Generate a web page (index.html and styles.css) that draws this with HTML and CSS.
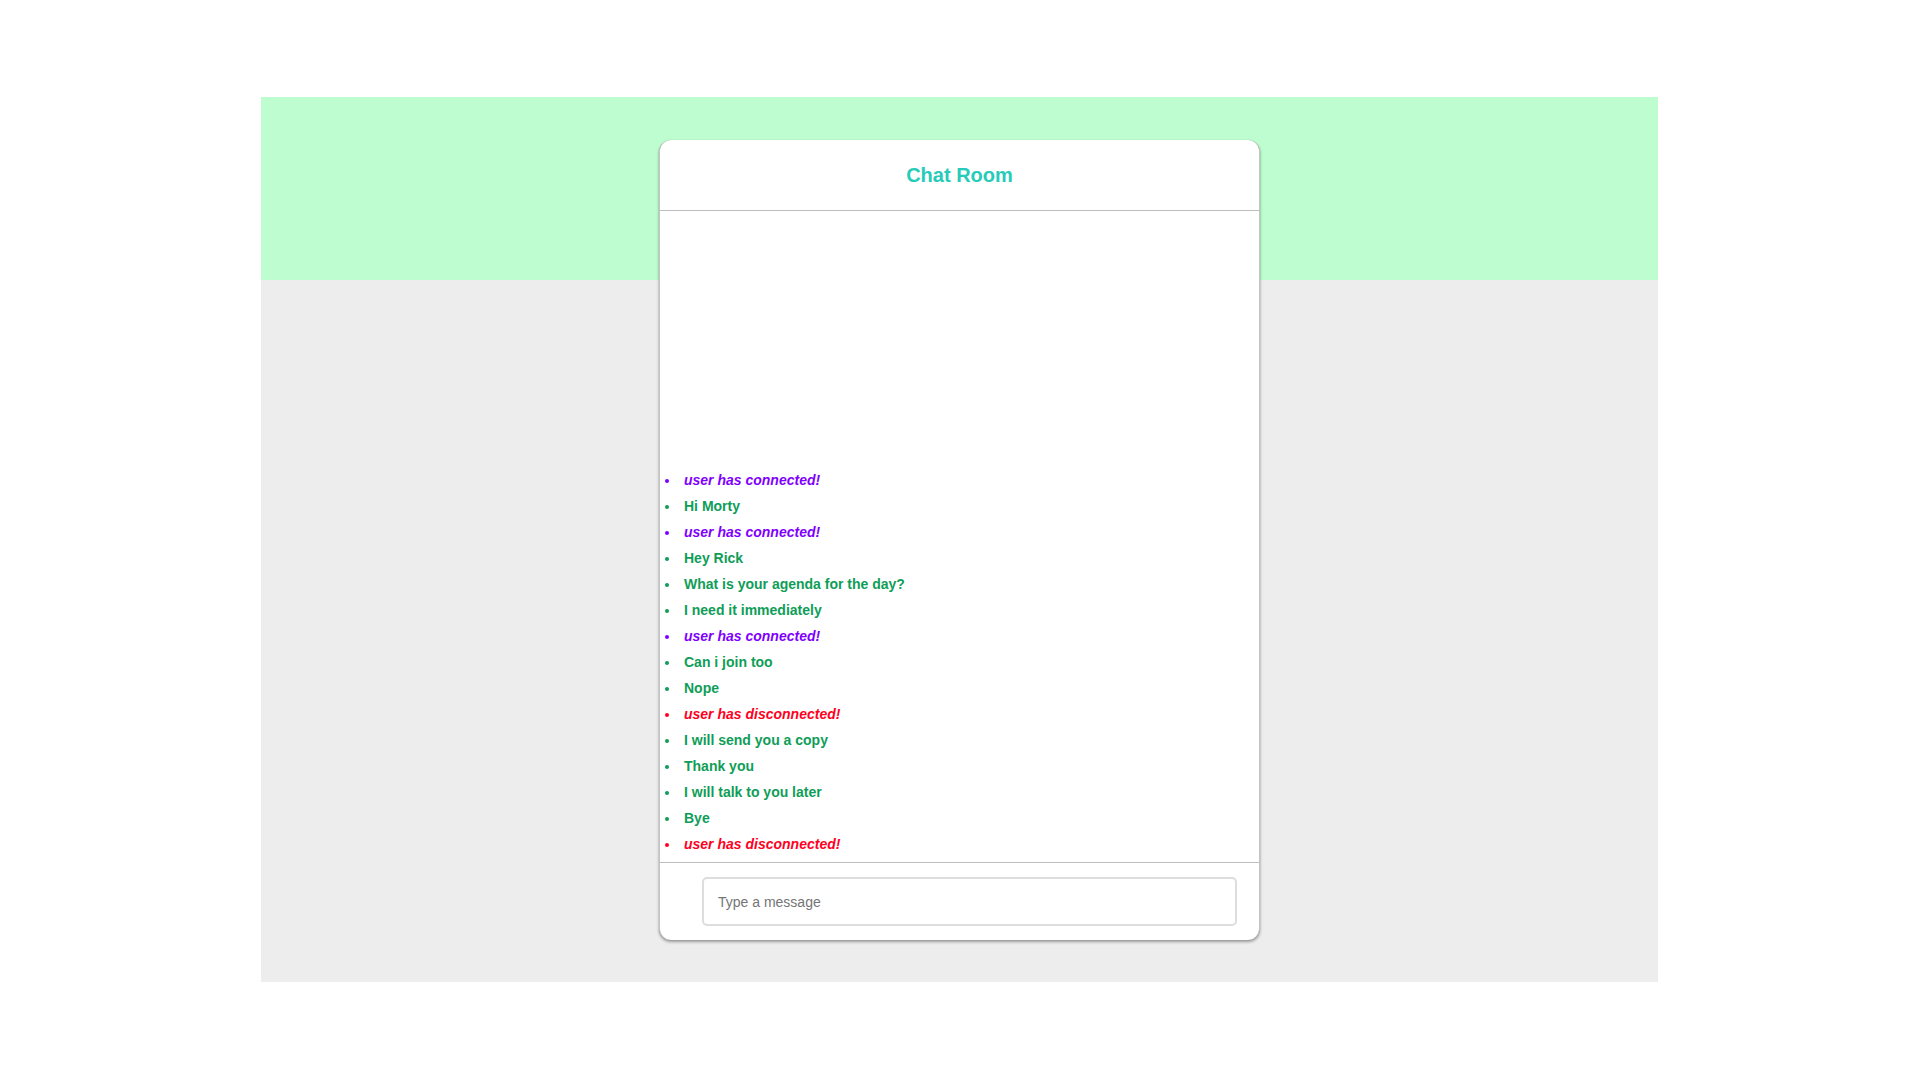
FILE: index.html
```html
<!DOCTYPE html>
<html lang="en">
<head>
<meta charset="utf-8">
<title>Chat Room</title>
<link rel="stylesheet" href="styles.css">
</head>
<body>
<main class="page">
  <section class="chat-card">
    <header class="chat-header">
      <h1 class="chat-title">Chat Room</h1>
    </header>
    <div class="chat-messages">
      <ul class="message-list">
        <li class="msg msg-connect">user has connected!</li>
        <li class="msg msg-text">Hi Morty</li>
        <li class="msg msg-connect">user has connected!</li>
        <li class="msg msg-text">Hey Rick</li>
        <li class="msg msg-text">What is your agenda for the day?</li>
        <li class="msg msg-text">I need it immediately</li>
        <li class="msg msg-connect">user has connected!</li>
        <li class="msg msg-text">Can i join too</li>
        <li class="msg msg-text">Nope</li>
        <li class="msg msg-disconnect">user has disconnected!</li>
        <li class="msg msg-text">I will send you a copy</li>
        <li class="msg msg-text">Thank you</li>
        <li class="msg msg-text">I will talk to you later</li>
        <li class="msg msg-text">Bye</li>
        <li class="msg msg-disconnect">user has disconnected!</li>
      </ul>
    </div>
    <form class="chat-form">
      <input class="chat-input" type="text" placeholder="Type a message" autofocus>
    </form>
  </section>
</main>
</body>
</html>
```

FILE: styles.css
```css
html, body {
  margin: 0;
  padding: 0;
  background: #ffffff;
  font-family: "Liberation Sans", Arial, sans-serif;
}

.page {
  width: 1397px;
  margin: 97px 0 0 261px;
  padding: 43px 0 42px 398px;
  box-sizing: border-box;
  height: 885px;
  background: linear-gradient(to bottom, #bdfdcf 0, #bdfdcf 183px, #ededed 183px, #ededed 100%);
  display: flex;
  justify-content: flex-start;
}

.chat-card {
  width: 601px;
  height: 800px;
  background: #ffffff;
  border-radius: 12px;
  box-sizing: border-box;
  border-left: 1px solid #c4c4c4;
  border-right: 1px solid #c4c4c4;
  box-shadow: 0 2px 3px rgba(0, 0, 0, 0.35), 0 0 1px rgba(0, 0, 0, 0.25);
  display: flex;
  flex-direction: column;
  overflow: hidden;
}

.chat-header {
  height: 71px;
  flex: 0 0 71px;
  box-sizing: border-box;
  border-bottom: 1px solid #bdbdbd;
  display: flex;
  align-items: center;
  justify-content: center;
}

.chat-title {
  margin: 0;
  font-size: 20px;
  font-weight: bold;
  color: #26cbb9;
  line-height: 24px;
}

.chat-messages {
  flex: 1 1 auto;
  display: flex;
  flex-direction: column;
  justify-content: flex-end;
  padding-bottom: 5px;
  overflow: hidden;
}

.message-list {
  margin: 0;
  padding: 0 0 0 20px;
}

.msg {
  font-size: 14px;
  font-weight: bold;
  line-height: 16px;
  padding: 5px 0 5px 4px;
}

.msg-text {
  color: #0f9d58;
}

.msg-connect {
  color: #7f00ff;
  font-style: italic;
}

.msg-disconnect {
  color: #ff0022;
  font-style: italic;
}

.chat-form {
  flex: 0 0 78px;
  box-sizing: border-box;
  border-top: 1px solid #bdbdbd;
  margin: 0;
  padding: 14px 22px 14px 42px;
  display: flex;
}

.chat-input {
  flex: 1 1 auto;
  height: 49px;
  box-sizing: border-box;
  border: 2px solid #dddddd;
  border-radius: 5px;
  padding: 0 14px;
  font-family: "Liberation Sans", Arial, sans-serif;
  font-size: 14px;
  color: #333;
  outline: none;
  caret-color: #333300;
}

.chat-input::placeholder {
  color: #757575;
}
```
